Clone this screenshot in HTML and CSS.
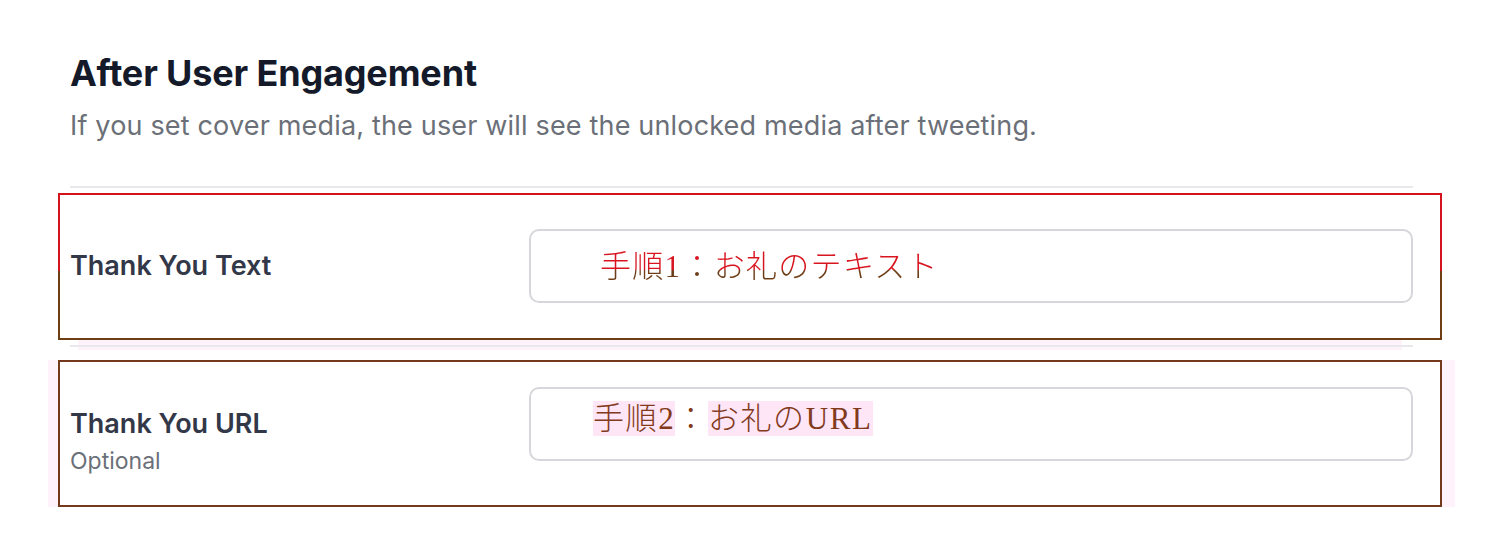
FILE: index.html
```html
<!DOCTYPE html>
<html lang="en">
<head>
<meta charset="utf-8">
<title>After User Engagement</title>
<link rel="stylesheet" href="styles.css">
</head>
<body>
<main class="page">
  <header class="section-head">
    <h2 class="title">After User Engagement</h2>
    <p class="subtitle">If you set cover media, the user will see the unlocked media after tweeting.</p>
  </header>

  <section class="row row-first">
    <div class="annot annot-red">
      <div class="field-label">
        <span class="label-title">Thank You Text</span>
      </div>
      <div class="field-input input-one">
        <span class="jp jp-red">手順1：お礼のテキスト</span>
      </div>
    </div>
  </section>

  <section class="row row-second">
    <div class="annot annot-brown">
      <div class="field-label">
        <span class="label-title">Thank You URL</span>
        <span class="label-hint">Optional</span>
      </div>
      <div class="field-input input-two">
        <span class="jp jp-brown"><span class="hl">手順2</span>：<span class="hl">お礼のURL</span></span>
      </div>
    </div>
  </section>
</main>
</body>
</html>
```

FILE: styles.css
```css
* { box-sizing: border-box; }

html, body {
  margin: 0;
  padding: 0;
  background: #ffffff;
}

body {
  font-family: Inter, "Noto Sans", sans-serif;
}

.page {
  width: 1343px;
  margin-left: 70px;
  padding-top: 51px;
}

.section-head {
  padding-bottom: 43px;
}

.title {
  margin: 0;
  font-size: 36px;
  line-height: 44px;
  font-weight: 700;
  color: #141a2a;
  letter-spacing: -0.15px;
}

.subtitle {
  margin: 14px 0 0;
  font-size: 27px;
  line-height: 34px;
  font-weight: 400;
  color: #6b7078;
  letter-spacing: 0.17px;
}

.row {
  border-top: 2px solid #e8e9ec;
}

.row-first {
  padding: 5px 0 5px;
}

.row-second {
  padding: 13px 0 0;
}

.annot {
  display: flex;
  align-items: flex-start;
  margin-left: -12px;
  margin-right: -29px;
  border: 2px solid transparent;
  padding: 0 27px 0 10px;
}

.annot-red {
  height: 147px;
  padding-top: 34px;
  border-image: linear-gradient(to bottom, #d3141c 0, #d3141c 53%, #6e3d14 53%, #6e3d14 100%) 1;
  box-shadow: -10px 40px 0 -30px #fff2fb;
}

.annot-brown {
  height: 147px;
  padding-top: 25px;
  border-color: #74391a;
  box-shadow: -10px 0 0 #fff2fb, 13px 0 0 #fff2fb, 0 6px 0 #fff2fb;
}

.field-label {
  width: 459px;
  flex: none;
  display: flex;
  flex-direction: column;
  padding-top: 21px;
}

.label-title {
  font-size: 27px;
  line-height: 32px;
  font-weight: 600;
  color: #333849;
  letter-spacing: 0px;
}

.label-hint {
  margin-top: 7px;
  font-size: 23px;
  line-height: 28px;
  color: #6b7078;
}

.field-input {
  flex: 1;
  height: 74px;
  border: 2px solid #d6d7da;
  border-radius: 10px;
  background: #ffffff;
  display: flex;
  align-items: center;
}

.input-one {
  padding-left: 69px;
  padding-top: 2px;
}

.input-two {
  padding-left: 62px;
  padding-bottom: 10px;
}

.jp {
  font-family: "Liberation Serif", "Noto Sans CJK JP", serif;
  font-size: 31px;
  line-height: 36px;
  font-weight: 300;
}

.jp-red {
  background: linear-gradient(to bottom, #d8141f 0, #d8141f 58%, #6e3d16 58%, #6e3d16 100%);
  -webkit-background-clip: text;
  background-clip: text;
  color: transparent;
  letter-spacing: 1.3px;
}

.jp-brown {
  color: #823a1c;
  letter-spacing: 1.6px;
}

.hl {
  background: #ffe6f6;
}
```
